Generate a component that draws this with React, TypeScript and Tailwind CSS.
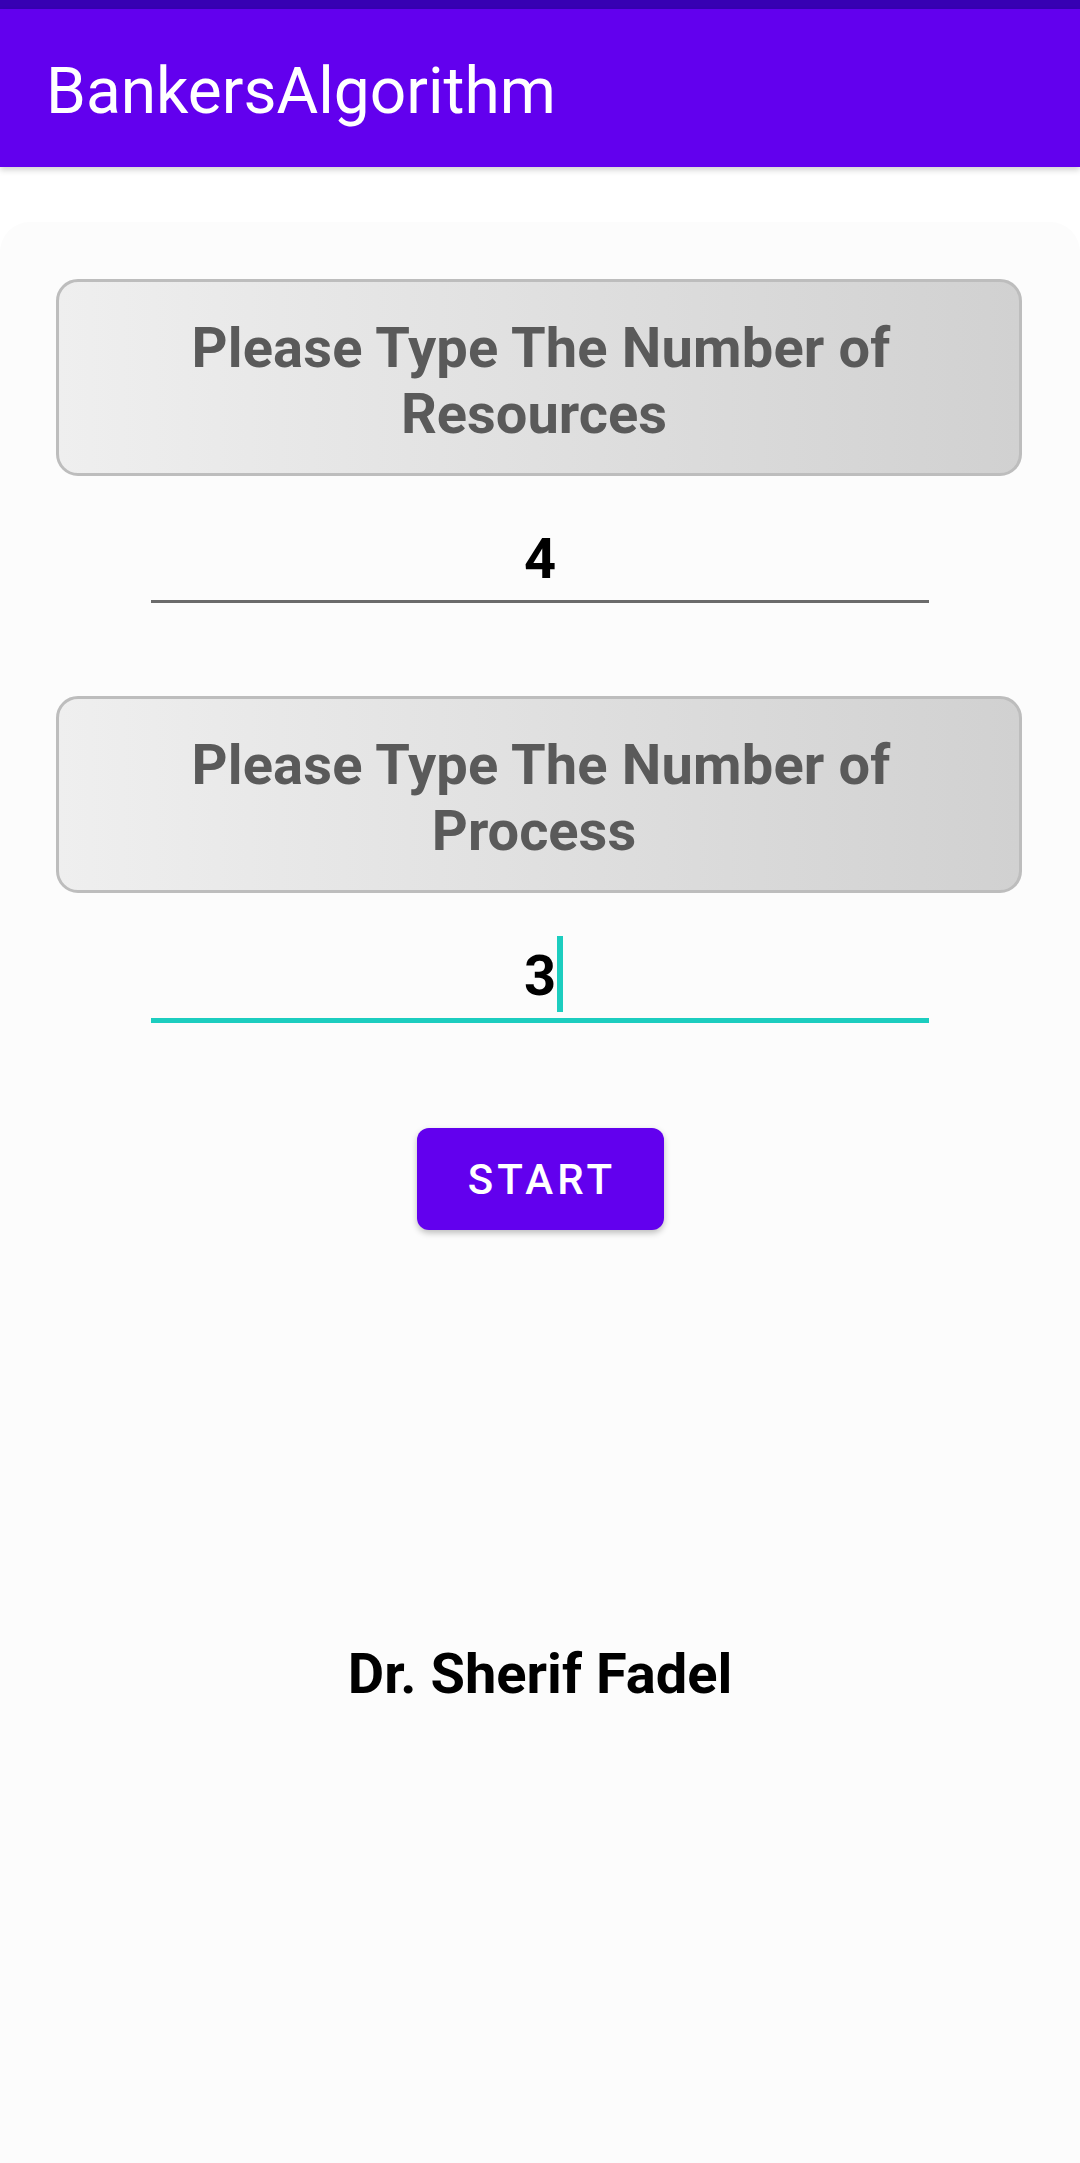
import React from "react";

const font = { fontFamily: "Roboto, 'Noto Sans', sans-serif" };

function PromptCard({ line1, line2 }: { line1: string; line2: string }) {
  return (
    <div className="ml-[56px] w-[966px] rounded-[22px] border-[3px] border-[#bdbdbd] bg-gradient-to-r from-[#efefef] to-[#d1d1d1] pt-[33px] pb-[26px] text-center text-[56px] leading-[66px] font-bold text-[#5a5a5a]">
      <div className="pl-[4px] tracking-[0.003em]">{line1}</div>
      <div className="pr-[10px]">{line2}</div>
    </div>
  );
}

export default function App() {
  return (
    <div className="min-h-[2163px] bg-white" style={font}>
      <div className="h-[9px] bg-[#3700B3]" />
      <div className="relative z-10 h-[158px] bg-[#6200EE] pl-[46px] pt-[45px] shadow-[0_3px_6px_rgba(0,0,0,0.18)]">
        <div className="text-[64px] leading-[75px] text-white">BankersAlgorithm</div>
      </div>
      <div className="h-[55px] bg-white" />
      <div className="min-h-[1941px] rounded-t-[30px] bg-[#fcfcfc] pt-[57px]">
        <PromptCard line1="Please Type The Number of" line2="Resources" />
        <div className="mx-auto mt-[50px] w-[778px]">
          <div className="text-center text-[56px] leading-[66px] font-bold text-black">4</div>
          <div className="mt-[8px] h-[3px] bg-[#6b6b6b]" />
        </div>
        <div className="mt-[93px]">
          <PromptCard line1="Please Type The Number of" line2="Process" />
        </div>
        <div className="mx-auto mt-[50px] w-[778px]">
          <div className="text-center text-[56px] leading-[66px] font-bold text-black">
            <span className="relative inline-block">
              3
              <span className="absolute left-full top-[-7px] ml-[1px] h-[76px] w-[6px] bg-[#1ccdbf]" />
            </span>
          </div>
          <div className="mt-[9px] h-[5px] bg-[#1ccdbf]" />
        </div>
        <div className="mt-[105px] flex justify-center">
          <button className="h-[102px] w-[247px] rounded-[12px] bg-[#6200EE] pl-[4px] text-[42px] font-medium tracking-[0.1em] text-white shadow-[0_3px_6px_rgba(0,0,0,0.25)]">
            START
          </button>
        </div>
        <div className="mt-[411px] text-center text-[56px] leading-[66px] font-bold text-black">
          Dr. Sherif Fadel
        </div>
      </div>
    </div>
  );
}
